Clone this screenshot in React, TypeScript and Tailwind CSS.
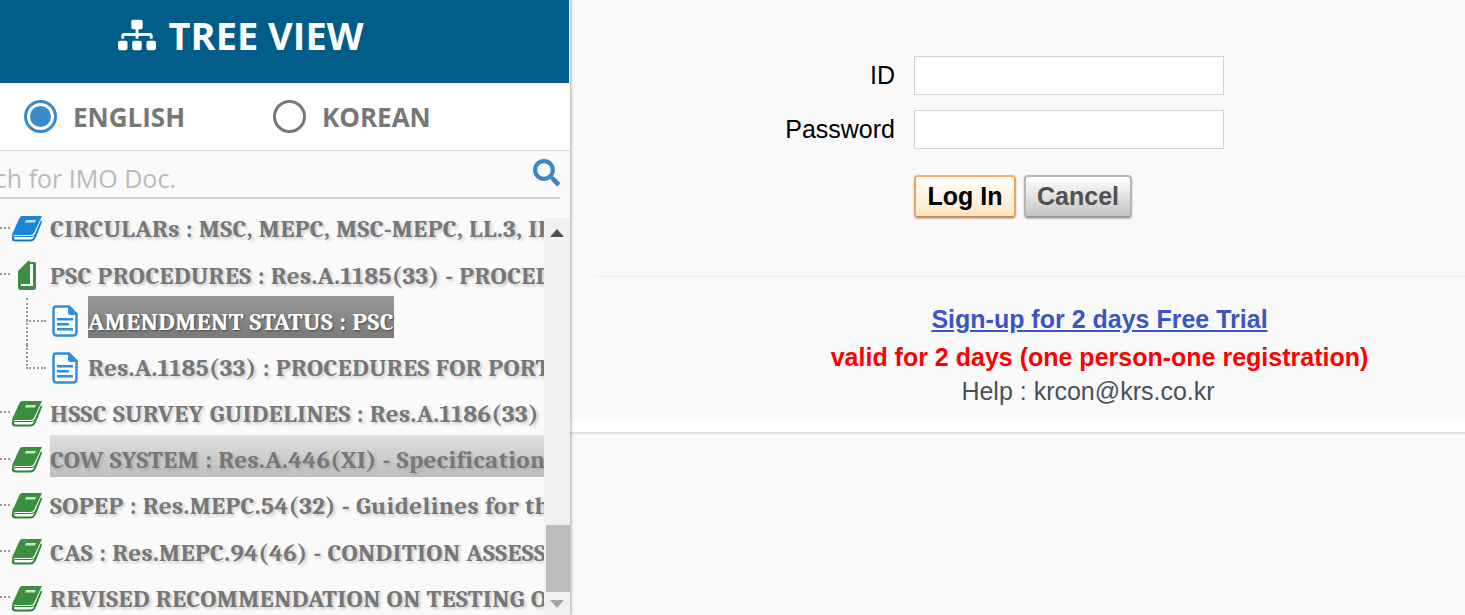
import React from 'react';
import { FaSitemap, FaSearch } from 'react-icons/fa';

const serif = "font-['Cambria','Liberation_Serif',serif]";

type Kind = 'blueBook' | 'greenBook' | 'openBook' | 'doc';

interface TreeRow {
  label: string;
  kind: Kind;
  child?: boolean;
  last?: boolean;
  selected?: boolean;
  hover?: boolean;
}

const rows: TreeRow[] = [
  { label: 'CIRCULARs : MSC, MEPC, MSC-MEPC, LL.3, II.1 : Circulars', kind: 'blueBook' },
  { label: 'PSC PROCEDURES : Res.A.1185(33) - PROCEDURES FOR PORT', kind: 'openBook' },
  { label: 'AMENDMENT STATUS : PSC', kind: 'doc', child: true, selected: true },
  { label: 'Res.A.1185(33) : PROCEDURES FOR PORT STATE CONTROL', kind: 'doc', child: true, last: true },
  { label: 'HSSC SURVEY GUIDELINES : Res.A.1186(33) - Survey Guidelines', kind: 'greenBook' },
  { label: 'COW SYSTEM : Res.A.446(XI) - Specifications for the design', kind: 'greenBook', hover: true },
  { label: 'SOPEP : Res.MEPC.54(32) - Guidelines for the development', kind: 'greenBook' },
  { label: 'CAS : Res.MEPC.94(46) - CONDITION ASSESSMENT SCHEME', kind: 'greenBook' },
  { label: 'REVISED RECOMMENDATION ON TESTING OF LIFE-SAVING', kind: 'greenBook' },
];

const BookIcon = ({ color, dark }: { color: string; dark: string }) => (
  <svg width="32" height="26" viewBox="0 0 32 26" className="shrink-0 blur-[0.4px]">
    <path d="M11 0 H31 L23 17 Q22 19 19 19 H5 Q2 19 1 22 L1 20 Q1 17 3 14 L8 3 Q9 0 11 0 Z" fill={color} />
    <path d="M1 21 Q0 25 4 25.5 H19 Q23 25.5 25 21 L31 6 L30 4 L24 18 Q23 20 20 20 H5 Q2 20 1 21 Z" fill={dark} />
    <path d="M4 21 H20 Q22 21 23.5 20 Q22 23.5 19 23.5 H5 Q3 23.5 3 22.5 Q3 21 4 21 Z" fill="#fff" />
    <path d="M15 4 L25 4 L24 6.5 L14 6.5 Z" fill="#fff" opacity="0.75" />
  </svg>
);

const OpenBookIcon = () => (
  <svg width="20" height="32" viewBox="0 0 20 32" className="shrink-0 blur-[0.4px]">
    <path d="M1 12 L12 1 L13 3 H18 Q19 3 19 5 V29 Q19 31 17 31 H4 Q1 31 1 28 Z" fill="#3c8f3e" />
    <path d="M13 5 H16 V27 H4 V25 H13 Z" fill="#fff" />
  </svg>
);

const DocIcon = () => (
  <svg width="26" height="32" viewBox="0 0 26 32" className="shrink-0 blur-[0.3px]">
    <path d="M4 1.5 H17 L24.5 9 V27 Q24.5 30.5 21 30.5 H4.5 Q1.5 30.5 1.5 27 V4.5 Q1.5 1.5 4 1.5 Z" fill="#fff" stroke="#2f8fdc" strokeWidth="2.5" />
    <path d="M16 1 V7.5 Q16 10 18.5 10 H25 Z" fill="#2f8fdc" />
    <path d="M5 13 H21 V15.5 H5 Z M5 18 H17 V20.5 H5 Z M5 23 H21 V25.5 H5 Z" fill="#2f8fdc" />
  </svg>
);

const icons: Record<Kind, React.ReactNode> = {
  blueBook: <BookIcon color="#1a86d8" dark="#1a78c8" />,
  greenBook: <BookIcon color="#3c8f3e" dark="#2f8032" />,
  openBook: <OpenBookIcon />,
  doc: <DocIcon />,
};

const Row = ({ row }: { row: TreeRow }) => (
  <div className={`relative flex h-[46.2px] items-center ${row.child ? 'pl-[26px]' : ''}`}>
    {row.child ? (
      <>
        <span className={`absolute left-[26px] top-0 w-0 border-l-2 border-dotted border-[#999] ${row.last ? 'h-[24px]' : 'h-[46.2px]'}`} />
        <span className="h-0 w-[20px] shrink-0 border-t-2 border-dotted border-[#999]" />
      </>
    ) : (
      <span className="mb-[3px] h-0 w-[10px] shrink-0 border-t-2 border-dotted border-[#999]" />
    )}
    <span className={`flex shrink-0 justify-center ${row.child ? 'w-[42px] pl-[6px] pr-[10px]' : 'w-[40px] pr-[7px]'}`}>
      {icons[row.kind]}
    </span>
    <span
      className={`mb-[8px] flex h-[42px] items-center whitespace-nowrap pt-[8px] text-[25px] font-bold tracking-[0.4px] ${serif} ${
        row.selected
          ? 'bg-gradient-to-b from-[#999999] to-[#7a7a7a] text-white [text-shadow:1px_1px_2px_#444]'
          : row.hover
            ? 'flex-1 bg-gradient-to-b from-[#dedede] to-[#bfbfbf] text-[#777] [text-shadow:2px_2px_3px_#aaa]'
            : 'text-[#777] [text-shadow:2px_2px_3px_#ccc]'
      }`}
    >
      {row.label}
    </span>
  </div>
);

export default function App() {
  return (
    <div className="flex h-[615px] w-[1465px] overflow-hidden bg-[#f9f9f9] font-['Liberation_Sans',sans-serif]">
      <aside className="z-10 flex w-[570px] shrink-0 flex-col overflow-hidden bg-[#fafafa] shadow-[2px_0_2px_rgba(0,0,0,0.2)]">
        <header className="mr-[1px] flex h-[83px] shrink-0 items-center justify-center gap-[13px] bg-[#005d8a] pb-[14px] pr-[88px] text-white">
          <FaSitemap className="text-[38px]" />
          <h1 className="font-['Open_Sans',sans-serif] text-[38px] font-bold leading-none">TREE VIEW</h1>
        </header>

        <div className="flex h-[68px] shrink-0 items-center border-b border-[#d8d8d8] bg-white pl-[24px] font-['Open_Sans',sans-serif] text-[26px] font-bold text-[#777]">
          <span className="flex h-[33px] w-[33px] items-center justify-center rounded-full border-[3px] border-[#3a8aca]">
            <span className="h-[21px] w-[21px] rounded-full bg-[#3a8aca]" />
          </span>
          <span className="ml-[16px] mt-[2px] w-[200px]">ENGLISH</span>
          <span className="h-[33px] w-[33px] rounded-full border-[3px] border-[#777]" />
          <span className="ml-[16px] mt-[2px]">KOREAN</span>
        </div>

        <div className="flex h-[48px] shrink-0 overflow-hidden pr-[10px]">
          <div className="relative flex-1 overflow-hidden border-b-2 border-[#d0d0d0]">
            <span className="ml-[-57px] block whitespace-nowrap pt-[9px] font-['Open_Sans',sans-serif] text-[25px] text-[#bbb]">
              Search for IMO Doc.
            </span>
            <FaSearch className="absolute right-0 top-[8px] text-[27px] text-[#3a87c8]" />
          </div>
        </div>

        <div className="flex min-h-0 flex-1 pt-[7px]">
          <div className="min-w-0 flex-1 overflow-hidden">
            {rows.map((row) => (
              <Row key={row.label} row={row} />
            ))}
          </div>
          <div className="mt-[12px] flex w-[26px] shrink-0 flex-col bg-[#f1f1f1]">
            <div className="flex h-[22px] items-center justify-center">
              <span className="mt-[8px] h-0 w-0 border-x-[7px] border-b-[8px] border-x-transparent border-b-[#505050]" />
            </div>
            <div className="flex-1" />
            <div className="ml-[2px] h-[67px] bg-[#bdbdbd]" />
            <div className="flex h-[23px] items-center justify-center">
              <span className="h-0 w-0 border-x-[7px] border-t-[8px] border-x-transparent border-t-[#a3a3a3]" />
            </div>
          </div>
        </div>
      </aside>

      <main className="flex min-w-0 flex-1 flex-col">
        <section className="flex h-[421px] flex-col">
          <form className="flex h-[276px] shrink-0 flex-col pt-[56px]">
            <div className="flex h-[39px] items-center">
              <label className="w-[325px] text-right text-[25px] text-black">ID</label>
              <input className="ml-[19px] h-[39px] w-[310px] border border-[#d4d4d4] bg-white" />
            </div>
            <div className="mt-[15px] flex h-[39px] items-center">
              <label className="w-[325px] text-right text-[25px] text-black">Password</label>
              <input type="password" className="ml-[19px] h-[39px] w-[310px] border border-[#d4d4d4] bg-white" />
            </div>
            <div className="ml-[344px] mt-[26px] flex gap-[8px]">
              <button type="button" className="h-[43px] w-[102px] rounded-[4px] border-2 border-x-[#e9a566] border-b-[#d98a45] border-t-[#f7b06a] bg-gradient-to-b from-white to-[#fde6c2] text-[25px] font-bold text-black shadow-[0_1px_2px_rgba(0,0,0,0.25)]">
                Log In
              </button>
              <button type="button" className="h-[43px] w-[108px] rounded-[4px] border-2 border-x-[#b5b5b5] border-b-[#9c9c9c] border-t-[#b5b5b5] bg-gradient-to-b from-white to-[#c4c4c4] text-[25px] font-bold text-[#505050] shadow-[0_1px_2px_rgba(0,0,0,0.25)]">
                Cancel
              </button>
            </div>
          </form>
          <hr className="ml-[25px] border-t border-[#eeeeee]" />
          <div className="flex flex-col items-center pl-[164px] pt-[23px] text-[25px] leading-[38px]">
            <a href="#" className="h-[38px] font-bold text-[#3a56c5] underline">
              Sign-up for 2 days Free Trial
            </a>
            <p className="font-bold text-[#ff0000]">valid for 2 days (one person-one registration)</p>
            <p className="pr-[23px] leading-[30px] text-[#4a5058]">Help : krcon@krs.co.kr</p>
          </div>
        </section>
        <div className="h-[13px] shrink-0 border-b-2 border-[#e2e2e2] bg-white" />
      </main>
    </div>
  );
}
